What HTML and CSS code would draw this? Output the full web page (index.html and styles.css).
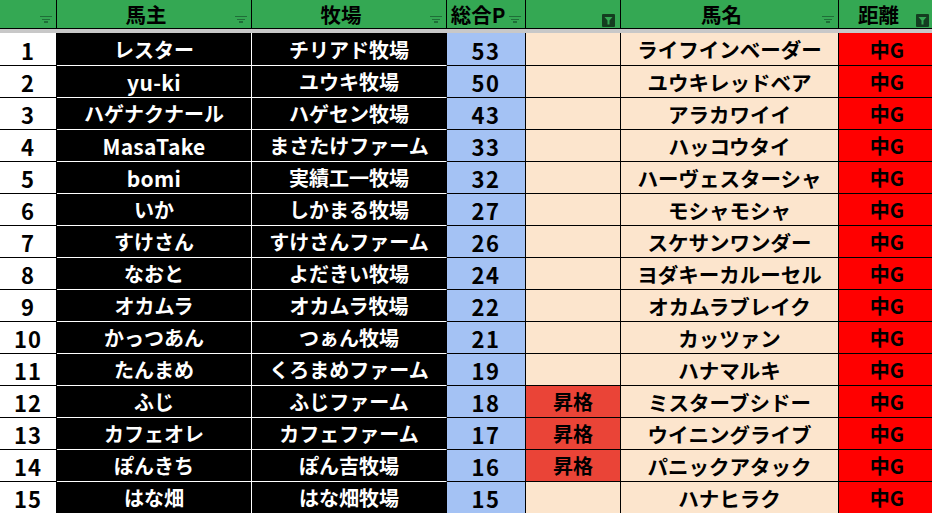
FILE: index.html
```html
<!DOCTYPE html>
<html lang="ja">
<head>
<meta charset="utf-8">
<title>Sheet</title>
<link rel="stylesheet" href="styles.css">
</head>
<body>
<div class="sheet">
  <div class="row head">
    <div class="cell h"><svg class="flt" viewBox="0 0 12 7"><rect x="0" y="0" width="12" height="1"/><rect x="2" y="3" width="8" height="1"/><rect x="4" y="5" width="4" height="2"/></svg></div>
    <div class="cell h">馬主<svg class="flt" viewBox="0 0 12 7"><rect x="0" y="0" width="12" height="1"/><rect x="2" y="3" width="8" height="1"/><rect x="4" y="5" width="4" height="2"/></svg></div>
    <div class="cell h">牧場<svg class="flt" viewBox="0 0 12 7"><rect x="0" y="0" width="12" height="1"/><rect x="2" y="3" width="8" height="1"/><rect x="4" y="5" width="4" height="2"/></svg></div>
    <div class="cell h">総合P<svg class="flt" viewBox="0 0 12 7"><rect x="0" y="0" width="12" height="1"/><rect x="2" y="3" width="8" height="1"/><rect x="4" y="5" width="4" height="2"/></svg></div>
    <div class="cell h"><svg class="act" viewBox="0 0 13 13"><rect width="13" height="13" rx="1"/><path class="fn" d="M2.5 3h8l-3 3.6v3.9h-2v-3.9z"/></svg></div>
    <div class="cell h">馬名<svg class="flt" viewBox="0 0 12 7"><rect x="0" y="0" width="12" height="1"/><rect x="2" y="3" width="8" height="1"/><rect x="4" y="5" width="4" height="2"/></svg></div>
    <div class="cell h">距離<svg class="act" viewBox="0 0 13 13"><rect width="13" height="13" rx="1"/><path class="fn" d="M2.5 3h8l-3 3.6v3.9h-2v-3.9z"/></svg></div>
  </div>
  <div class="band"></div>

  <div class="row"><div class="cell num">1</div><div class="cell owner">レスター</div><div class="cell farm">チリアド牧場</div><div class="cell pts">53</div><div class="cell stat"></div><div class="cell horse">ライフインベーダー</div><div class="cell dist">中G</div></div>
  <div class="row"><div class="cell num">2</div><div class="cell owner lat">yu-ki</div><div class="cell farm">ユウキ牧場</div><div class="cell pts">50</div><div class="cell stat"></div><div class="cell horse">ユウキレッドベア</div><div class="cell dist">中G</div></div>
  <div class="row"><div class="cell num">3</div><div class="cell owner">ハゲナクナール</div><div class="cell farm">ハゲセン牧場</div><div class="cell pts">43</div><div class="cell stat"></div><div class="cell horse">アラカワイイ</div><div class="cell dist">中G</div></div>
  <div class="row"><div class="cell num">4</div><div class="cell owner lat">MasaTake</div><div class="cell farm">まさたけファーム</div><div class="cell pts">33</div><div class="cell stat"></div><div class="cell horse">ハッコウタイ</div><div class="cell dist">中G</div></div>
  <div class="row"><div class="cell num">5</div><div class="cell owner lat">bomi</div><div class="cell farm">実績工一牧場</div><div class="cell pts">32</div><div class="cell stat"></div><div class="cell horse">ハーヴェスターシャ</div><div class="cell dist">中G</div></div>
  <div class="row"><div class="cell num">6</div><div class="cell owner">いか</div><div class="cell farm">しかまる牧場</div><div class="cell pts">27</div><div class="cell stat"></div><div class="cell horse">モシャモシャ</div><div class="cell dist">中G</div></div>
  <div class="row"><div class="cell num">7</div><div class="cell owner">すけさん</div><div class="cell farm">すけさんファーム</div><div class="cell pts">26</div><div class="cell stat"></div><div class="cell horse">スケサンワンダー</div><div class="cell dist">中G</div></div>
  <div class="row"><div class="cell num">8</div><div class="cell owner">なおと</div><div class="cell farm">よだきい牧場</div><div class="cell pts">24</div><div class="cell stat"></div><div class="cell horse">ヨダキーカルーセル</div><div class="cell dist">中G</div></div>
  <div class="row"><div class="cell num">9</div><div class="cell owner">オカムラ</div><div class="cell farm">オカムラ牧場</div><div class="cell pts">22</div><div class="cell stat"></div><div class="cell horse">オカムラブレイク</div><div class="cell dist">中G</div></div>
  <div class="row"><div class="cell num">10</div><div class="cell owner">かっつあん</div><div class="cell farm">つぁん牧場</div><div class="cell pts">21</div><div class="cell stat"></div><div class="cell horse">カッツァン</div><div class="cell dist">中G</div></div>
  <div class="row"><div class="cell num">11</div><div class="cell owner">たんまめ</div><div class="cell farm">くろまめファーム</div><div class="cell pts">19</div><div class="cell stat"></div><div class="cell horse">ハナマルキ</div><div class="cell dist">中G</div></div>
  <div class="row"><div class="cell num">12</div><div class="cell owner">ふじ</div><div class="cell farm">ふじファーム</div><div class="cell pts">18</div><div class="cell stat up">昇格</div><div class="cell horse">ミスターブシドー</div><div class="cell dist">中G</div></div>
  <div class="row"><div class="cell num">13</div><div class="cell owner">カフェオレ</div><div class="cell farm">カフェファーム</div><div class="cell pts">17</div><div class="cell stat up">昇格</div><div class="cell horse">ウイニングライブ</div><div class="cell dist">中G</div></div>
  <div class="row"><div class="cell num">14</div><div class="cell owner">ぽんきち</div><div class="cell farm">ぽん吉牧場</div><div class="cell pts">16</div><div class="cell stat up">昇格</div><div class="cell horse">パニックアタック</div><div class="cell dist">中G</div></div>
  <div class="row"><div class="cell num">15</div><div class="cell owner">はな畑</div><div class="cell farm">はな畑牧場</div><div class="cell pts">15</div><div class="cell stat"></div><div class="cell horse">ハナヒラク</div><div class="cell dist">中G</div></div>
</div>
</body>
</html>
```

FILE: styles.css
```css
* { box-sizing: border-box; }
html, body {
  margin: 0;
  padding: 0;
  background: #fff;
  overflow: hidden;
}
body {
  font-family: "Noto Sans CJK JP", "Noto Sans", sans-serif;
  font-weight: 700;
  color: #000;
}
.sheet {
  width: 935px;
}
.row {
  display: grid;
  grid-template-columns: 57px 195px 195px 79px 95px 218px 96px;
  height: 32px;
}
.row.head {
  height: 29px;
}
.band {
  height: 4px;
  background: #c8c8c8;
}
.cell {
  position: relative;
  display: flex;
  align-items: center;
  justify-content: center;
  border-right: 1px solid #000;
  font-size: 20px;
  line-height: 1;
  padding-top: 1px;
  white-space: nowrap;
  overflow: hidden;
}
.row + .row .cell { border-top: 1px solid #000; }
.band + .row .cell { border-top: none; }

.h {
  background: #34a853;
  border-bottom: 1px solid #000;
  padding-right: 16px;
  padding-top: 1px;
  font-size: 20.5px;
}
.flt {
  position: absolute;
  right: 4px;
  top: 16px;
  width: 12px;
  height: 7px;
  fill: #1f6e38;
}
.act {
  position: absolute;
  right: 5px;
  top: 14px;
  width: 13px;
  height: 13px;
  fill: #143d20;
}
.act .fn { fill: #34a853; }

.num { background: #fff; font-size: 22px; letter-spacing: 1px; }
.row + .row .owner, .row + .row .farm { border-top-color: #fff; }
.owner { background: #000; color: #fff; border-right-color: #fff; }
.owner.lat { font-size: 21px; letter-spacing: 0.3px; }
.farm { background: #000; color: #fff; }
.pts { background: #a4c2f4; font-size: 22px; letter-spacing: 1.5px; }
.stat { background: #fce5cd; }
.stat.up { background: #ea4437; }
.horse { background: #fce5cd; font-size: 20.5px; }
.dist { background: #ff0000; border-right: none; }
```
